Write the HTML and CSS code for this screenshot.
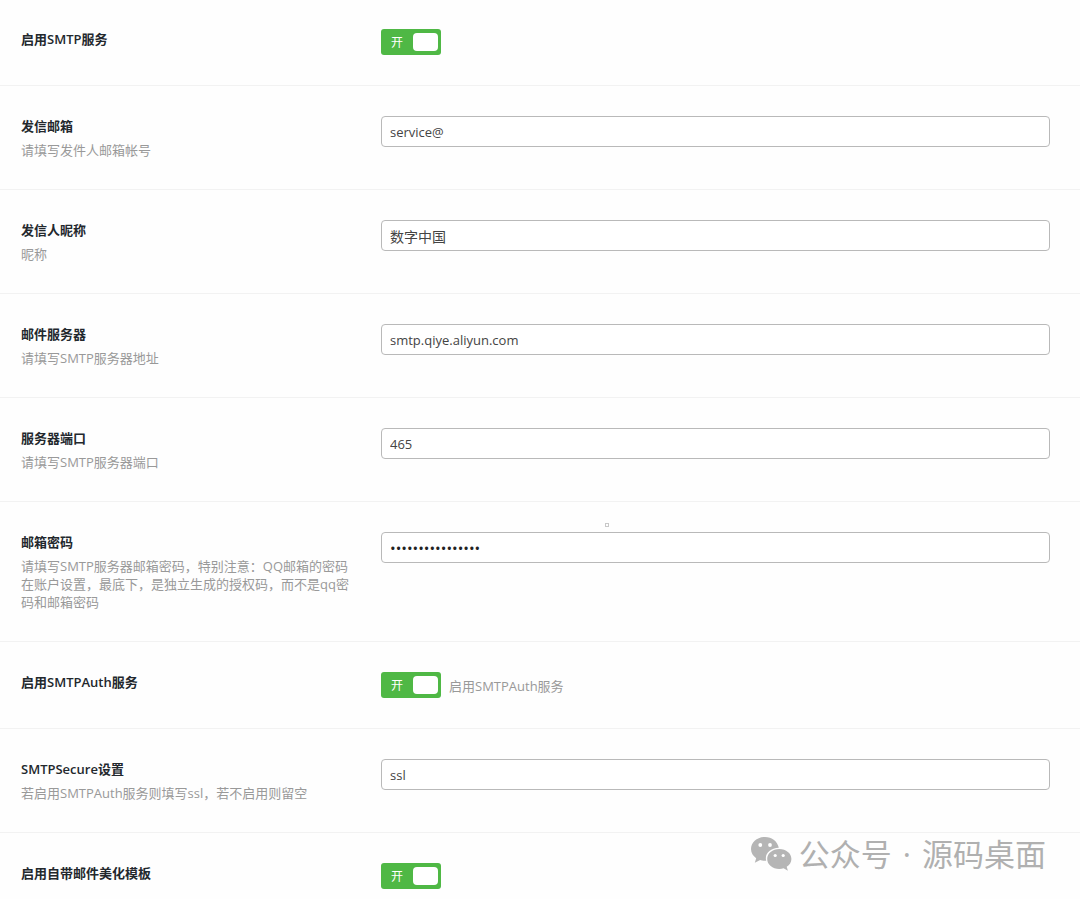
FILE: index.html
```html
<!DOCTYPE html>
<html lang="zh-CN">
<head>
<meta charset="utf-8">
<meta name="viewport" content="width=device-width, initial-scale=1">
<title>SMTP</title>
<link rel="stylesheet" href="styles.css">
</head>
<body>
<form class="settings">
  <div class="row">
    <div class="info"><label class="title" for="smtp">启用SMTP服务</label></div>
    <div class="field"><span class="switch"><input type="checkbox" id="smtp" checked><span class="state">开</span></span></div>
  </div>
  <div class="row">
    <div class="info"><label class="title" for="mail">发信邮箱</label><p class="desc">请填写发件人邮箱帐号</p></div>
    <div class="field"><input class="text" type="text" id="mail" value="service@"></div>
  </div>
  <div class="row">
    <div class="info"><label class="title" for="nick">发信人昵称</label><p class="desc">昵称</p></div>
    <div class="field"><input class="text text-cjk" type="text" id="nick" value="数字中国"></div>
  </div>
  <div class="row">
    <div class="info"><label class="title" for="host">邮件服务器</label><p class="desc">请填写SMTP服务器地址</p></div>
    <div class="field"><input class="text" type="text" id="host" value="smtp.qiye.aliyun.com"></div>
  </div>
  <div class="row">
    <div class="info"><label class="title" for="port">服务器端口</label><p class="desc">请填写SMTP服务器端口</p></div>
    <div class="field"><input class="text" type="text" id="port" value="465"></div>
  </div>
  <div class="row">
    <div class="info"><label class="title" for="pass">邮箱密码</label><p class="desc">请填写SMTP服务器邮箱密码，特别注意：QQ邮箱的密码在账户设置，最底下，是独立生成的授权码，而不是qq密码和邮箱密码</p></div>
    <div class="field"><span class="speck" aria-hidden="true"></span><input class="text text-secret" type="password" id="pass" value="abcdefghijklmnop"></div>
  </div>
  <div class="row">
    <div class="info"><label class="title" for="auth">启用SMTPAuth服务</label></div>
    <div class="field"><span class="switch"><input type="checkbox" id="auth" checked><span class="state">开</span></span><span class="note">启用SMTPAuth服务</span></div>
  </div>
  <div class="row">
    <div class="info"><label class="title" for="secure">SMTPSecure设置</label><p class="desc">若启用SMTPAuth服务则填写ssl，若不启用则留空</p></div>
    <div class="field"><input class="text" type="text" id="secure" value="ssl"></div>
  </div>
  <div class="row">
    <div class="info"><label class="title" for="tpl">启用自带邮件美化模板</label></div>
    <div class="field"><span class="switch"><input type="checkbox" id="tpl" checked><span class="state">开</span></span></div>
  </div>
  <div class="watermark">
    <svg class="logo" viewBox="0 0 42 36" aria-hidden="true">
      <path fill="#b5b5b5" d="M15 1C7 1 1 6.300 1 13c0 3.800 2 7 5.200 9.200L4.800 26.800l5.300-2.700c1.600.5 3.200.7 4.900.7h1.200C14.300 18 20 12 28.800 11.800 27.500 5.500 22 1 15 1z"/>
      <path fill="#b5b5b5" d="M29.300 13C22.500 13 17.200 17.400 17.200 23s5.300 10 12.100 10c1.500 0 3-.2 4.300-.7l4.300 2.400-1.200-3.900c2.900-1.900 4.700-4.600 4.700-7.800 0-5.600-5.300-10-12.100-10z"/>
      <g fill="#fff"><circle cx="10.300" cy="9" r="1.900"/><circle cx="20" cy="9" r="1.900"/><circle cx="25.200" cy="19.500" r="1.600"/><circle cx="33.200" cy="19.500" r="1.600"/></g>
    </svg>
    <span>公众号<span class="dot"> · </span>源码桌面</span>
  </div>
</form>
</body>
</html>
```
FILE: styles.css
```css
* { box-sizing: border-box; }
body {
  margin: 0;
  background: #fefefe;
  font-family: "Open Sans", "Noto Sans CJK SC", sans-serif;
  font-size: 13px;
  color: #23282d;
}
.settings { position: relative; }
.row {
  display: grid;
  grid-template-columns: 1fr 2fr;
  padding: 30px 0;
  border-bottom: 1px solid #f2f2f2;
}
.row:first-child { padding-top: 29px; }
.row:nth-last-child(2) { padding-bottom: 0; border-bottom: 0; }
.info { padding: 0 8px 0 21px; }
.title { display: block; line-height: 20px; font-weight: 600; }
.desc { margin: 5px 0 0; line-height: 18px; color: #999; }
.field {
  position: relative;
  display: flex;
  align-items: flex-start;
  padding: 0 30px 0 21px;
}
.text {
  width: 100%;
  height: 31px;
  padding: 0 8px;
  border: 1px solid #b9b9b9;
  border-radius: 4px;
  background: #fff;
  color: #444;
  font-family: inherit;
  font-size: 13px;
}
.text-cjk { font-size: 14px; }
.text-secret { font-size: 15px; color: #222; }
.switch { position: relative; display: flex; }
.switch input {
  appearance: none;
  display: flex;
  align-items: center;
  justify-content: flex-end;
  width: 60px;
  height: 26px;
  margin: 0;
  padding: 0 3px;
  border-radius: 3px;
  background: #4fb845;
}
.switch input::before {
  content: "";
  width: 25px;
  height: 18px;
  border-radius: 4px;
  background: #fff;
}
.state {
  position: absolute;
  left: 10px;
  top: 0;
  line-height: 28px;
  font-size: 12px;
  color: #fff;
  pointer-events: none;
}
.note { margin-left: 8px; line-height: 28px; height: 26px; color: #999; }
.speck {
  position: absolute;
  left: 245px;
  top: -9px;
  width: 4px;
  height: 4px;
  border: 1px solid #c8c8c8;
}
.watermark {
  position: absolute;
  right: 34px;
  bottom: 15px;
  display: flex;
  align-items: center;
  gap: 7px;
  line-height: 40px;
  font-family: "Noto Sans CJK SC", sans-serif;
  font-size: 31px;
  color: #b0b0b0;
}
.dot { margin: 0 3px; font-family: "Open Sans", sans-serif; }
.logo { width: 42px; height: 36px; }
```
